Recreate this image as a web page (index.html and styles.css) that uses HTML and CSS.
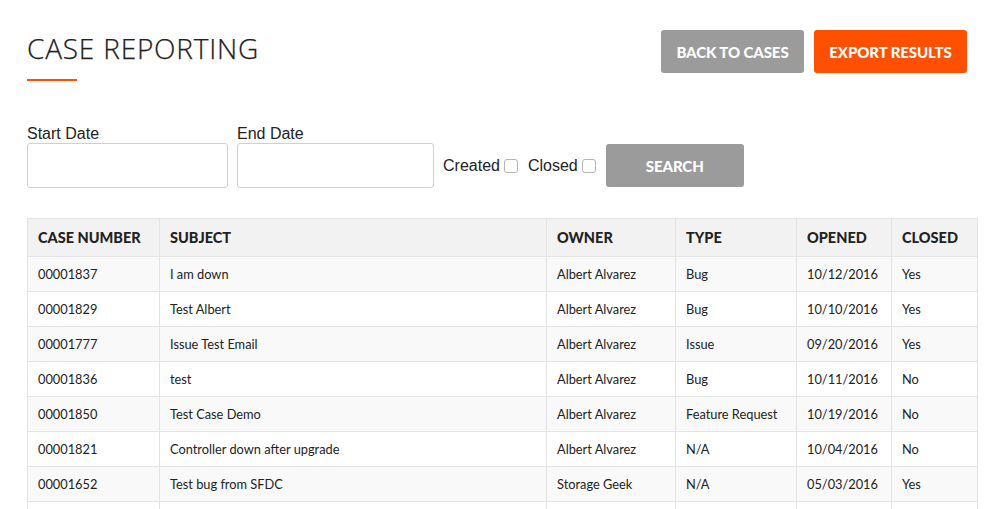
FILE: index.html
```html
<!DOCTYPE html>
<html>
<head>
<meta charset="utf-8">
<link rel="stylesheet" href="styles.css">
</head>
<body>
<div class="page">
  <header class="top">
    <div class="title-block">
      <h1 class="title">CASE REPORTING</h1>
      <div class="title-rule"></div>
    </div>
    <div class="actions">
      <button class="btn btn-gray btn-back">BACK TO CASES</button>
      <button class="btn btn-orange btn-export">EXPORT RESULTS</button>
    </div>
  </header>

  <form class="filters">
    <div class="field field-start">
      <label class="label">Start Date</label>
      <input class="input" type="text">
    </div>
    <div class="field field-end">
      <label class="label">End Date</label>
      <input class="input" type="text">
    </div>
    <label class="check">Created <span class="box"></span></label>
    <label class="check">Closed <span class="box"></span></label>
    <button type="button" class="btn btn-gray btn-search">SEARCH</button>
  </form>

  <table class="cases">
    <colgroup>
      <col class="c1"><col class="c2"><col class="c3"><col class="c4"><col class="c5"><col class="c6">
    </colgroup>
    <thead>
      <tr><th>CASE NUMBER</th><th>SUBJECT</th><th>OWNER</th><th>TYPE</th><th>OPENED</th><th>CLOSED</th></tr>
    </thead>
    <tbody>
      <tr><td>00001837</td><td>I am down</td><td>Albert Alvarez</td><td>Bug</td><td>10/12/2016</td><td>Yes</td></tr>
      <tr><td>00001829</td><td>Test Albert</td><td>Albert Alvarez</td><td>Bug</td><td>10/10/2016</td><td>Yes</td></tr>
      <tr><td>00001777</td><td>Issue Test Email</td><td>Albert Alvarez</td><td>Issue</td><td>09/20/2016</td><td>Yes</td></tr>
      <tr><td>00001836</td><td>test</td><td>Albert Alvarez</td><td>Bug</td><td>10/11/2016</td><td>No</td></tr>
      <tr><td>00001850</td><td>Test Case Demo</td><td>Albert Alvarez</td><td>Feature Request</td><td>10/19/2016</td><td>No</td></tr>
      <tr><td>00001821</td><td>Controller down after upgrade</td><td>Albert Alvarez</td><td>N/A</td><td>10/04/2016</td><td>No</td></tr>
      <tr><td>00001652</td><td>Test bug from SFDC</td><td>Storage Geek</td><td>N/A</td><td>05/03/2016</td><td>Yes</td></tr>
      <tr><td></td><td></td><td></td><td></td><td></td><td></td></tr>
    </tbody>
  </table>
</div>
</body>
</html>
```

FILE: styles.css
```css
* { box-sizing: border-box; }
html, body { margin: 0; padding: 0; background: #fff; overflow: hidden; }
body { font-family: "Lato", "Liberation Sans", sans-serif; color: #333; }

.page { padding: 30px 21px 0 27px; }

.top { display: flex; justify-content: space-between; align-items: flex-start; height: 50px; }
.title {
  margin: 4px 0 0 0;
  font-family: "Open Sans", sans-serif;
  font-weight: 300;
  font-size: 28px;
  line-height: 28px;
  color: #222;
  letter-spacing: 0.8px;
  -webkit-text-stroke: 0.25px #222;
}
.title-rule { width: 50px; height: 2px; background: #ff4f00; margin-top: 17px; }

.actions { display: flex; gap: 10px; margin-right: 10px; }
.btn {
  border: 0;
  border-radius: 3px;
  color: #fff;
  font-family: "Lato", sans-serif;
  font-weight: 900;
  font-size: 15px;
  letter-spacing: -0.1px;
  cursor: pointer;
}
.btn-gray { background: #9b9b9b; }
.btn-orange { background: #ff4f00; }
.btn-back { width: 143px; height: 43px; }
.btn-export { width: 153px; height: 43px; }

.filters { display: flex; align-items: flex-end; margin-top: 45px; }
.field { display: flex; flex-direction: column; }
.field-start { width: 201px; margin-right: 9px; }
.field-end { width: 197px; margin-right: 9px; }
.label {
  font-family: "Liberation Sans", Arial, sans-serif;
  font-size: 16px;
  line-height: 18px;
  color: #222;
  margin-bottom: 0;
}
.input {
  width: 100%;
  height: 45px;
  border: 1px solid #d0d0d0;
  border-radius: 3px;
  background: #fff;
}
.check {
  display: flex; align-items: center;
  height: 45px;
  font-family: "Liberation Sans", Arial, sans-serif;
  font-size: 16px;
  color: #222;
  margin-right: 10px;
}
.box {
  display: inline-block;
  width: 14px; height: 14px;
  border: 1px solid #b5b5b5;
  border-radius: 3px;
  margin-left: 4px;
  background: #fff;
}
.btn-search { width: 138px; height: 43px; margin-bottom: 1px; }

.cases {
  margin-top: 30px;
  width: 950px;
  border-collapse: collapse;
  table-layout: fixed;
  font-family: "Lato", sans-serif;
}
.c1 { width: 132px; } .c2 { width: 387px; } .c3 { width: 129px; }
.c4 { width: 121px; } .c5 { width: 95px; } .c6 { width: 86px; }
.cases th, .cases td {
  border: 1px solid #e3e3e3;
  text-align: left;
  padding: 0 10px;
}
.cases th {
  height: 38px;
  background: #f2f2f2;
  font-weight: 900;
  font-size: 14.5px;
  color: #222;
}
.cases td {
  height: 35px;
  font-size: 12.8px;
  color: #222;
}
.cases tbody tr:nth-child(odd) td { background: #f9f9f9; }
.cases tbody tr:nth-child(even) td { background: #fff; }
```
